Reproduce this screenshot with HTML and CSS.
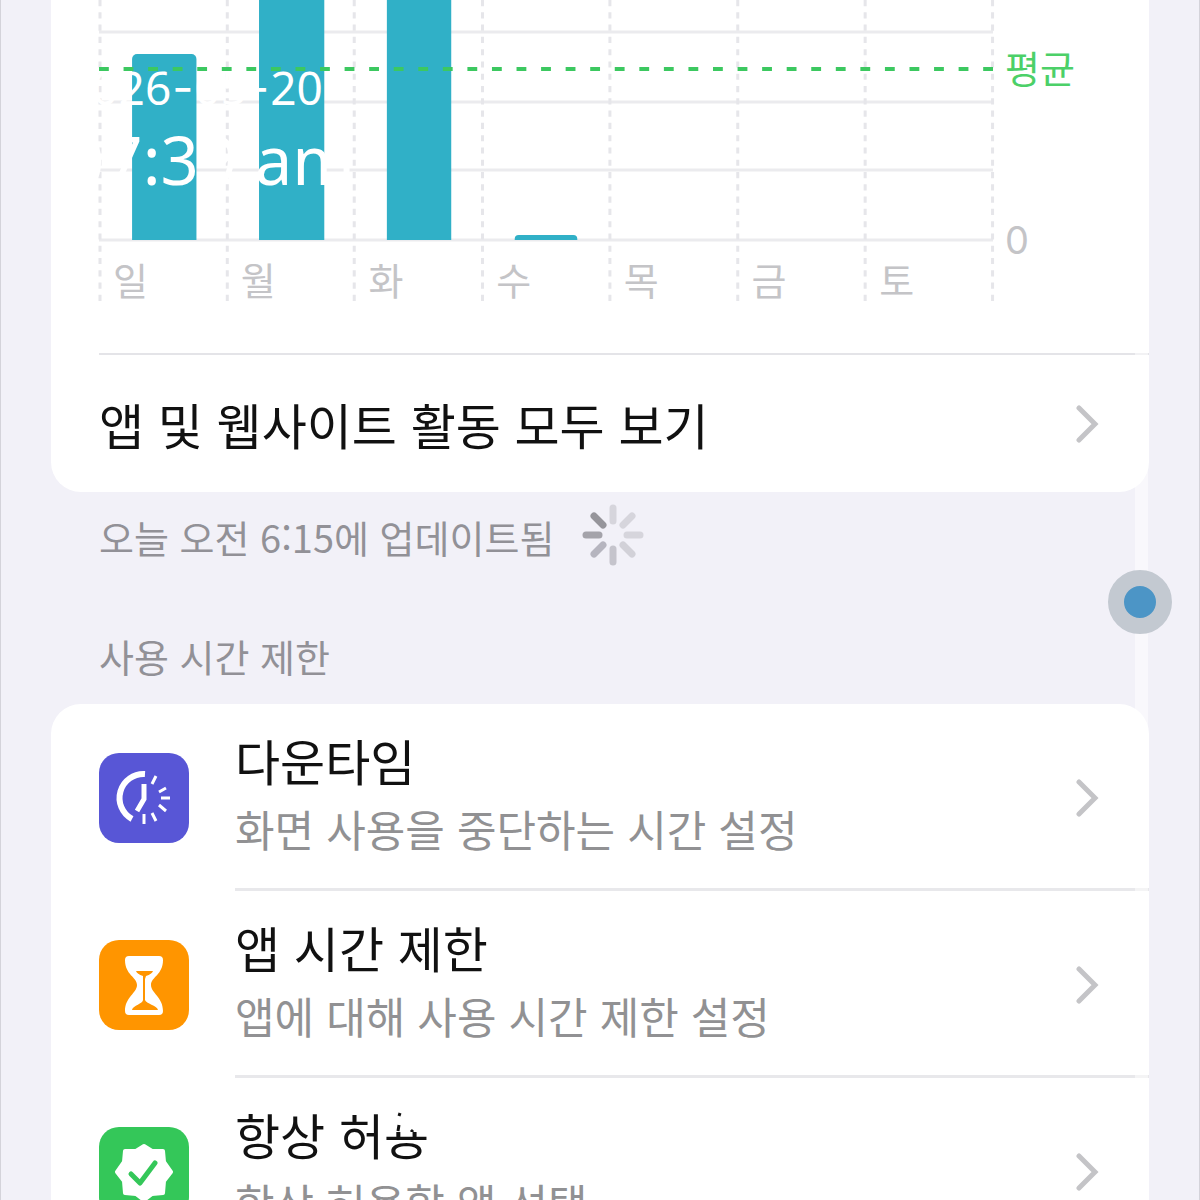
FILE: index.html
```html
<!DOCTYPE html>
<html lang="ko">
<head>
<meta charset="utf-8">
<meta name="viewport" content="width=device-width, initial-scale=1">
<title>스크린 타임</title>
<link rel="stylesheet" href="styles.css">
</head>
<body>
<main class="screen">
  <section class="card usage">
    <div class="chart">
      <div class="plot">
        <svg class="plot-grid" aria-hidden="true">
          <g class="rule">
            <line x1="0" x2="100%" y1="32" y2="32"/>
            <line x1="0" x2="100%" y1="102" y2="102"/>
            <line x1="0" x2="100%" y1="170" y2="170"/>
            <line x1="0" x2="100%" y1="240" y2="240"/>
          </g>
          <g class="day-rule">
            <line x1="1" x2="1" y1="0" y2="302" pathLength="295"/>
            <line x1="14.35%" x2="14.35%" y1="0" y2="302" pathLength="295"/>
            <line x1="28.55%" x2="28.55%" y1="0" y2="302" pathLength="295"/>
            <line x1="42.9%" x2="42.9%" y1="0" y2="302" pathLength="295"/>
            <line x1="57.15%" x2="57.15%" y1="0" y2="302" pathLength="295"/>
            <line x1="71.45%" x2="71.45%" y1="0" y2="302" pathLength="295"/>
            <line x1="85.7%" x2="85.7%" y1="0" y2="302" pathLength="295"/>
            <line x1="99.95%" x2="99.95%" y1="0" y2="302" pathLength="295"/>
          </g>
          <svg width="100%" height="240">
            <g class="bar">
              <rect x="3.7%" y="54" width="7.2%" height="200" rx="5"/>
              <rect x="17.9%" y="-20" width="7.3%" height="270"/>
              <rect x="32.2%" y="-20" width="7.2%" height="270"/>
              <rect x="46.5%" y="235" width="7%" height="16" rx="4"/>
            </g>
          </svg>
          <line class="average" x1="0" x2="100%" y1="69" y2="69" pathLength="728"/>
        </svg>
        <ol class="days">
          <li>일</li><li>월</li><li>화</li><li>수</li><li>목</li><li>금</li><li>토</li>
        </ol>
      </div>
      <div class="scale">
        <span class="scale-average">평균</span>
        <span class="scale-zero">0</span>
      </div>
    </div>
    <a class="all-activity" href="#activity">
      <span class="title">앱 및 웹사이트 활동 모두 보기</span>
      <svg class="chevron" viewBox="0 0 24 38" aria-hidden="true"><path d="M4 3 20 19 4 35"/></svg>
    </a>
  </section>

  <p class="updated">
    <span>오늘 오전 6:15에 업데이트됨</span>
    <svg class="spinner" viewBox="-31 -31 62 62" aria-hidden="true">
      <path d="M0-14V-27" stroke="#d6d5dc"/>
      <path d="M10-10 19-19" stroke="#d6d5dc"/>
      <path d="M14 0H27" stroke="#d6d5dc"/>
      <path d="M10 10 19 19" stroke="#d2d1d8"/>
      <path d="M0 14V27" stroke="#c5c4cc"/>
      <path d="M-10 10-19 19" stroke="#b6b5bf"/>
      <path d="M-14 0H-27" stroke="#a4a3aa"/>
      <path d="M-10-10-19-19" stroke="#96959b"/>
    </svg>
  </p>

  <h2 class="section-title">사용 시간 제한</h2>

  <nav class="card limits" aria-label="사용 시간 제한">
    <a class="row" href="#downtime">
      <svg class="icon downtime" viewBox="0 0 90 90" fill="none" stroke="#fff" aria-hidden="true">
        <path d="M46 21A24 24 0 0 0 33 66" stroke-width="6"/>
        <path d="M45 31V46L38 58" stroke-width="5"/>
        <path d="M53 31 57 23M60 39 67 35M62 45H71M60 52 67 58M53 60 57 68M45 61V71" stroke-width="3"/>
      </svg>
      <span class="text"><span class="title">다운타임</span><span class="detail">화면 사용을 중단하는 시간 설정</span></span>
      <svg class="chevron" viewBox="0 0 24 38" aria-hidden="true"><path d="M4 3 20 19 4 35"/></svg>
    </a>
    <a class="row" href="#app-limits">
      <svg class="icon app-limits" viewBox="0 0 90 90" aria-hidden="true">
        <path fill="#fff" d="M30 16H60Q64 16 64 20C64 35 52 37 52 45C52 53 64 57 64 71Q64 75 60 75H30Q26 75 26 71C26 57 38 53 38 45C38 37 26 35 26 20Q26 16 30 16Z"/>
        <path fill="#ff9500" d="M37 31H54Q53 34 47 36L46 39V60C47 64 58 65 59 70H33C34 65 44 64 44 60V39L44 36Q38 34 37 31Z"/>
      </svg>
      <span class="text"><span class="title">앱 시간 제한</span><span class="detail">앱에 대해 사용 시간 제한 설정</span></span>
      <svg class="chevron" viewBox="0 0 24 38" aria-hidden="true"><path d="M4 3 20 19 4 35"/></svg>
    </a>
    <a class="row" href="#always-allowed">
      <svg class="icon always-allowed" viewBox="0 0 90 90" aria-hidden="true">
        <path fill="#fff" stroke="#fff" stroke-width="4" stroke-linejoin="round" d="M45 19 53 24 64 24 65 35 72 45 65 54 64 66 53 67 45 73 37 67 26 66 25 54 18 45 25 35 26 24 37 24Z"/>
        <path fill="none" stroke="#34c759" stroke-width="5" stroke-linecap="round" stroke-linejoin="round" d="M32 47 41 56 56 36"/>
      </svg>
      <span class="text"><span class="title">항상 허<span class="redrawn">용<svg viewBox="0 0 44 20" aria-hidden="true"><path d="M15 4 16 1M14 19 15 13M27 20 29 18"/></svg></span></span><span class="detail">항상 허용할 앱 선택</span></span>
      <svg class="chevron" viewBox="0 0 24 38" aria-hidden="true"><path d="M4 3 20 19 4 35"/></svg>
    </a>
  </nav>

  <div class="scroll-track"></div>
  <time class="stamp">
    <span class="stamp-date"><span>2026</span><span class="dash">-</span><span>05</span><span class="dash">-</span><span>20</span></span>
    <span class="stamp-time">07:39 am</span>
  </time>
  <button class="touch-dot" type="button" aria-label="보조 메뉴"></button>
</main>
</body>
</html>
```
FILE: styles.css
```css
* { box-sizing: border-box; }

body {
  margin: 0;
  background: #f2f1f8;
  color: #111;
  font-family: "Noto Sans CJK KR", sans-serif;
}

a { color: inherit; text-decoration: none; }

.screen {
  position: relative;
  height: 100vh;
  overflow: hidden;
  padding: 0 50px;
  border: solid #d4d3da;
  border-width: 0 1px;
}

.card { background: #fff; }

/* Weekly chart */
.usage { border-radius: 0 0 30px 30px; }

.chart {
  display: flex;
  height: 353px;
  padding-left: 48px;
}

.plot {
  display: grid;
  flex: 1;
  height: 304px;
}

.plot-grid, .days { grid-area: 1 / 1; }

.plot-grid {
  width: 100%;
  height: 304px;
  overflow: visible;
}

.rule { stroke: #ebebee; stroke-width: 3; }
.day-rule { stroke: #e6e6ea; stroke-width: 3; stroke-dasharray: 6 6; }
.bar { fill: #30b0c7; }
.average { stroke: #3cc860; stroke-width: 4; stroke-dasharray: 8 12; }

.days {
  display: grid;
  grid-template-columns: repeat(7, 1fr);
  align-self: end;
  margin: 0;
  padding: 0 0 3px;
  list-style: none;
  color: #c4c4c7;
  font-size: 38px;
  line-height: 44px;
}

.days li { padding-left: 14px; }

.scale {
  display: flex;
  flex-direction: column;
  gap: 133px;
  width: 156px;
  padding: 47px 0 0 12px;
  color: #c4c4c7;
  font-size: 38px;
  line-height: 40px;
}

.scale-average { color: #4cd068; }
.scale-zero { font-family: Inter, sans-serif; }

.all-activity {
  display: flex;
  align-items: center;
  justify-content: space-between;
  height: 139px;
  margin-left: 48px;
  padding-right: 50px;
  border-top: 2px solid #e4e4e8;
}

.title { font-size: 49px; line-height: 70px; }

.chevron {
  width: 24px;
  height: 38px;
  fill: none;
  stroke: #c4c4c7;
  stroke-width: 5;
  stroke-linecap: round;
}

/* Captions between cards */
.updated {
  display: flex;
  align-items: center;
  gap: 28px;
  margin: 12px 0 0;
  padding-left: 48px;
  color: #929197;
  font-size: 38px;
  line-height: 58px;
}

.updated span { padding-top: 4px; }

.spinner { width: 62px; height: 62px; stroke-width: 7; stroke-linecap: round; }

.section-title {
  margin: 60px 0 0;
  padding-left: 48px;
  color: #929197;
  font-size: 38px;
  font-weight: 400;
  line-height: 60px;
}

/* Limits list */
.limits { margin-top: 18px; border-radius: 30px 30px 0 0; }

.row {
  display: flex;
  align-items: center;
  padding-left: 48px;
}

.icon {
  width: 90px;
  height: 90px;
  margin-right: 46px;
  border-radius: 20px;
}

.downtime { background: #5856d6; }
.app-limits { background: #ff9500; }
.always-allowed { background: #34c759; }

.text {
  display: flex;
  flex: 1;
  flex-direction: column;
  height: 187px;
  padding-top: 21px;
}

.detail { color: #919193; font-size: 43px; line-height: 66px; }

.row .chevron { margin-right: 50px; }

.row:not(:last-child) {
  background: linear-gradient(#e8e8eb, #e8e8eb) 184px 100% / 100% 3px no-repeat;
}

.redrawn { position: relative; }

.redrawn svg {
  position: absolute;
  top: 14px;
  left: 0;
  width: 44px;
  height: 20px;
  background: #fff;
  fill: none;
  stroke: #111;
  stroke-width: 3;
}

/* Layers above the page */
.scroll-track {
  position: absolute;
  top: 0;
  right: 51px;
  bottom: 0;
  width: 13px;
  background: rgb(255 255 255 / 50%);
}

.stamp {
  position: absolute;
  top: 59px;
  left: 65px;
  color: #fff;
  font-family: "Noto Sans", sans-serif;
}

.stamp-date {
  display: flex;
  gap: 1px;
  font-size: 46px;
  line-height: 56px;
}

.dash { font-family: Inter, sans-serif; }

.stamp-time {
  display: block;
  font-size: 67px;
  line-height: 88px;
}

.touch-dot {
  position: absolute;
  top: 570px;
  right: 27px;
  width: 64px;
  height: 64px;
  padding: 0;
  border: 16px solid #c3c9d1;
  border-radius: 50%;
  background: #4c95c6;
}
```
